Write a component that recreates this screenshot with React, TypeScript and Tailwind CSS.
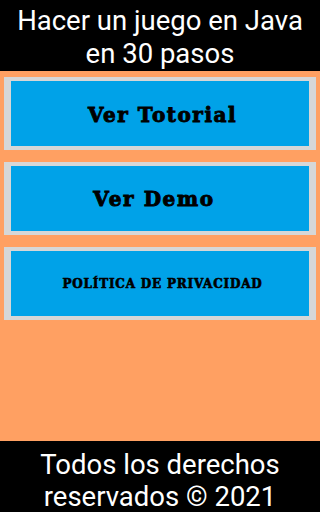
import React from "react";

const serif = { fontFamily: '"DejaVu Serif", "Liberation Serif", serif' };

function Card({ label, cls }: { label: string; cls: string }) {
  return (
    <div className="h-[73px] mx-[4px] bg-[#d6d7d7] px-[7px] py-[4px]">
      <div className="h-full bg-[#00a2e8] flex items-center justify-center">
        <span className={cls} style={serif}>
          {label}
        </span>
      </div>
    </div>
  );
}

export default function App() {
  return (
    <div
      className="w-[320px] h-[512px] flex flex-col bg-[#ffa062] overflow-hidden"
      style={{ fontFamily: 'Roboto, "Noto Sans", sans-serif' }}
    >
      <div className="h-[71px] shrink-0 bg-black text-white text-[27.5px] leading-[33px] text-center pt-[4px] overflow-hidden">
        Hacer un juego en Java
        <br />
        en 30 pasos
      </div>
      <div className="flex-1 flex flex-col gap-[12px] pt-[6px]">
        <Card
          label="Ver Totorial"
          cls="text-[20px] font-bold text-black tracking-[1.5px] [-webkit-text-stroke:0.9px_black] pl-[5px] pt-[3px]"
        />
        <Card
          label="Ver Demo"
          cls="text-[20px] font-bold text-black tracking-[1.6px] [-webkit-text-stroke:0.9px_black] pr-[12px]"
        />
        <Card
          label="POLÍTICA DE PRIVACIDAD"
          cls="text-[12px] font-bold text-black tracking-[0.8px] [-webkit-text-stroke:0.6px_black] pl-[5px]"
        />
      </div>
      <div className="h-[71px] shrink-0 bg-black text-white text-[27.5px] leading-[32px] text-center pt-[8px] overflow-hidden">
        Todos los derechos
        <br />
        reservados © 2021
      </div>
    </div>
  );
}
